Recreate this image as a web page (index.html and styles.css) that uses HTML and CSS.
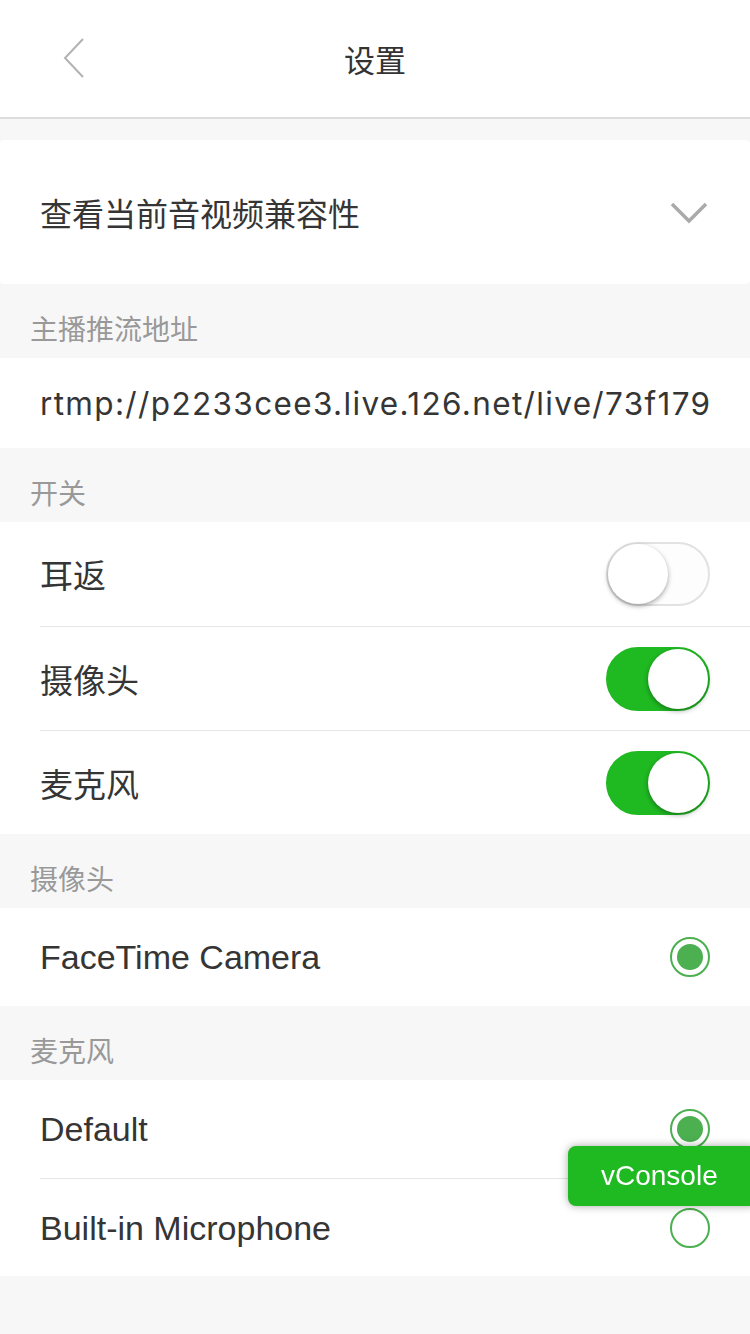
FILE: index.html
```html
<!DOCTYPE html>
<html lang="zh-CN">
<head>
<meta charset="utf-8">
<title>设置</title>
<link rel="stylesheet" href="styles.css">
</head>
<body>
<header class="nav">
  <div class="nav-back">
    <svg width="24" height="42" viewBox="0 0 24 42"><path d="M21 2 L3 21 L21 40" fill="none" stroke="#b2b2b2" stroke-width="2"/></svg>
  </div>
  <div class="nav-title">设置</div>
  <div class="nav-side"></div>
</header>
<main class="page">
  <section class="card compat">
    <span class="cjk title-cjk">查看当前音视频兼容性</span>
    <svg class="chev" width="38" height="24" viewBox="0 0 38 24"><path d="M2 3 L19 20 L36 3" fill="none" stroke="#aaaaaa" stroke-width="3.5"/></svg>
  </section>

  <div class="group-title">主播推流地址</div>
  <div class="cells">
    <div class="cell url"><span class="url-text">rtmp://p2233cee3.live.126.net/live/73f179</span></div>
  </div>

  <div class="group-title">开关</div>
  <div class="cells">
    <div class="cell switch-cell"><span class="cjk">耳返</span><span class="switch"></span></div>
    <div class="cell switch-cell"><span class="cjk">摄像头</span><span class="switch on"></span></div>
    <div class="cell switch-cell"><span class="cjk">麦克风</span><span class="switch on"></span></div>
  </div>

  <div class="group-title">摄像头</div>
  <div class="cells">
    <div class="cell radio-cell"><span class="latin">FaceTime Camera</span><span class="radio checked"></span></div>
  </div>

  <div class="group-title">麦克风</div>
  <div class="cells">
    <div class="cell radio-cell"><span class="latin">Default</span><span class="radio checked"></span></div>
    <div class="cell radio-cell"><span class="latin">Built-in Microphone</span><span class="radio"></span></div>
  </div>
</main>
<div class="vc-switch">vConsole</div>
</body>
</html>
```
FILE: styles.css
```css
* { box-sizing: border-box; }
html, body { margin: 0; padding: 0; }
body {
  background: #f7f7f7;
  font-family: "Liberation Sans", "Noto Sans CJK SC", sans-serif;
  color: #353535;
  width: 750px;
  min-height: 1334px;
}
.nav {
  height: 119px;
  background: #fff;
  border-bottom: 2px solid #dcdcdc;
  display: grid;
  grid-template-columns: 1fr auto 1fr;
  align-items: center;
}
.nav-back { padding-left: 62px; display: flex; align-items: center; padding-bottom: 2px; }
.nav-back svg { display: block; }
.nav-title {
  font-family: "Noto Sans CJK SC", sans-serif;
  font-size: 31px;
  color: #333;
  line-height: 40px;
}
.page { padding-top: 21px; }
.card {
  background: #fff;
  border-radius: 4px;
}
.compat {
  height: 144px;
  display: flex;
  align-items: center;
  justify-content: space-between;
  padding: 0 42px 0 40px;
}
.compat .chev { display: block; margin-top: 2px; }
.cjk {
  font-family: "Noto Sans CJK SC", sans-serif;
  font-size: 33px;
  color: #353535;
  line-height: 40px;
}
.cjk.title-cjk { font-size: 32px; }
.latin {
  font-family: "Liberation Sans", sans-serif;
  font-size: 34px;
  color: #353535;
  line-height: 40px;
}
.group-title {
  font-family: "Noto Sans CJK SC", sans-serif;
  font-size: 28px;
  color: #999;
  height: 74px;
  line-height: 34px;
  padding: 27px 30px 0;
}
.cells { background: #fff; padding-left: 40px; }
.cell {
  display: flex;
  align-items: center;
  justify-content: space-between;
  padding-right: 40px;
  border-top: 1px solid #e5e5e5;
}
.cell:first-child { border-top: none; }
.url { height: 90px; }
.url-text {
  font-family: "Inter", sans-serif;
  font-size: 31.5px;
  color: #353535;
  white-space: nowrap;
  display: block;
  letter-spacing: 1.35px;
}
.switch-cell { height: 104px; }
.switch {
  position: relative;
  width: 104px;
  height: 64px;
  border: 2px solid #e2e2e2;
  border-radius: 32px;
  background: #fdfdfd;
  flex: none;
}
.switch::after {
  content: "";
  position: absolute;
  left: 0;
  top: 0;
  width: 60px;
  height: 60px;
  border-radius: 50%;
  background: #fff;
  box-shadow: 0 2px 5px rgba(0,0,0,0.35);
}
.switch.on {
  background: #1fb922;
  border-color: #1fb922;
}
.switch.on::after { left: 40px; }
.radio-cell { height: 98px; }
.radio {
  width: 40px;
  height: 40px;
  border: 2px solid #4caf50;
  border-radius: 50%;
  display: flex;
  align-items: center;
  justify-content: center;
  flex: none;
}
.radio.checked::before {
  content: "";
  width: 26px;
  height: 26px;
  border-radius: 50%;
  background: #4caf50;
}
.vc-switch {
  position: fixed;
  left: 568px;
  top: 1146px;
  width: 190px;
  height: 60px;
  background: #1fb922;
  color: #fff;
  border-radius: 8px;
  box-shadow: 0 0 8px rgba(0,0,0,0.35);
  font-family: "Liberation Sans", sans-serif;
  font-size: 28px;
  line-height: 60px;
  padding-left: 33px;
}
```
